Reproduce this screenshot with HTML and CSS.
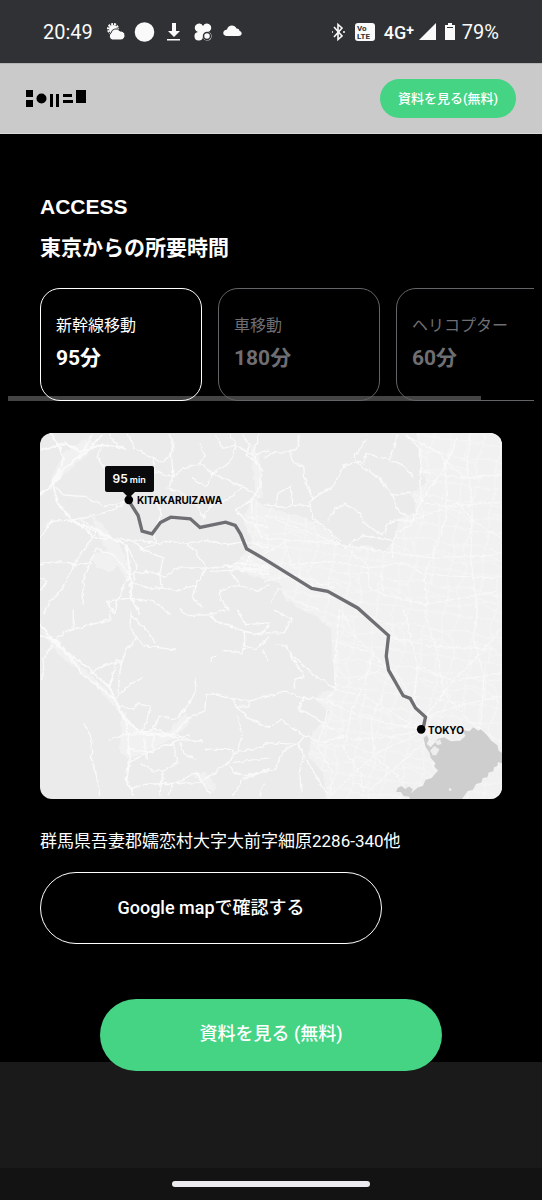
FILE: index.html
```html
<!DOCTYPE html>
<html lang="ja">

<head>
    <meta charset="utf-8">
    <meta name="viewport" content="width=device-width, initial-scale=1">
    <title>ACCESS</title>
    <link rel="stylesheet" href="styles.css">
</head>

<body>
    <!-- Phone status bar -->
    <div class="status">
        <span class="status-text">20:49</span>
        <svg class="status-left" viewBox="0 0 136 24" fill="#fafafa">
            <circle cx="7" cy="9" r="5" fill="none" stroke="#fafafa" stroke-width="2" stroke-dasharray="2 1" />
            <circle cx="7" cy="9" r="4" />
            <path d="M6 20a4 4 0 0 1-1-7 5 5 0 0 1 9-2 4.500 4.500 0 0 1 1 9z" stroke="#303134" stroke-width="1" />
            <circle cx="38.500" cy="12" r="9.800" />
            <path d="M66 3h4v8h4l-6 6-6-6h4zM61 19h13v1.500H61z" />
            <path d="M97 6a4.300 4.300 0 1 1 5 6 4.300 4.300 0 1 1-5 5 4.300 4.300 0 1 1-5-5A4.300 4.300 0 1 1 97 6z" />
            <circle cx="101" cy="16" r="3.500" stroke="#303134" stroke-width="1.500" />
            <path d="M121 16c-5 0-5-6 0-6.500 1-5 8-5 9.500-1 2 0 3 1 3 2.500 3 .5 3 5-1 5z" />
        </svg>
        <svg class="status-right" viewBox="0 0 48 24" fill="#fafafa">
            <path d="M4 7l8 9-4 3.500v-15L12 8l-8 9M2 12h1M13 12h2" fill="none" stroke="#fafafa" stroke-width="1.600" />
            <rect x="25" y="3" width="20" height="18" rx="3" />
            <g fill="#303134" font-family="Roboto, sans-serif" font-size="8" font-weight="700">
                <text x="27" y="11">Vo</text>
                <text x="27" y="19">LTE</text>
            </g>
        </svg>
        <span class="status-text status-net">4G<b>+</b></span>
        <svg class="status-power" viewBox="0 0 40 24" fill="#fafafa">
            <path d="M18 3v17H1z" />
            <path d="M30 3h4v2h3v15H27V5h3z" />
            <path d="M29 7h6v1h-6z" fill="#303134" />
        </svg>
        <span class="status-text">79%</span>
    </div>

    <header class="header">
        <a href="#" class="logo" aria-label="Home">
            <svg viewBox="0 0 60 18">
                <path d="M0 0h7v7H0zM0 10h7v7H0zM24 4h3v13h-3zM30 4h3v13h-3zM37 4h9v3h-9zM37 10h10v3H37zM50 0h10v13H50z" />
                <circle cx="15.500" cy="8.500" r="5" />
            </svg>
        </a>
        <a href="#" class="header-btn">資料を見る(無料)</a>
    </header>

    <main class="access">
        <h2 class="title">ACCESS</h2>
        <p class="subtitle">東京からの所要時間</p>

        <div class="tabs">
            <div class="tabs-list">
                <button class="tab active">新幹線移動<strong>95分</strong></button>
                <button class="tab">車移動<strong>180分</strong></button>
                <button class="tab">ヘリコプター<strong>60分</strong></button>
            </div>
        </div>

        <div class="map">
            <svg viewBox="0 0 1389 1101">
                <defs>
                    <filter id="wiggle" x="0" y="0" width="100%" height="100%">
                        <feTurbulence type="fractalNoise" baseFrequency="0.06" numOctaves="2" seed="4" />
                        <feDisplacementMap in="SourceGraphic" scale="14" xChannelSelector="R" yChannelSelector="G" />
                    </filter>
                    <pattern id="streets" width="150" height="130" patternUnits="userSpaceOnUse" patternTransform="rotate(8)">
                        <path d="M0 20L60 32 150 20M0 72L40 60 95 85 150 72M0 110L80 105 150 110M30 0L20 50 30 130M74 0L85 60 74 130M120 0L108 40 128 90 120 130M20 50L85 60 128 90M60 32L108 40" fill="none" stroke="#f9f9f9" stroke-width="2" />
                    </pattern>
                </defs>
                <rect width="1389" height="1101" fill="#ebebeb" />
                <g filter="url(#wiggle)">
                    <!-- Kanto plain -->
                    <g id="plain">
                        <path class="land" d="M1130 -20L1145 106 1160 150 1120 180 1130 236 1080 260 1065 316 1040 356 985 340 905 346 860 300 805 256 740 240 675 221 640 190 610 260 640 330 600 380 560 400 640 430 675 440 720 450 735 496 785 531 830 550 875 591 880 680 890 771 850 780 825 801 870 840 855 861 820 900 805 971 850 1020 865 1120H1409V-20z" />
                        <path d="M1130 -20L1145 106 1160 150 1120 180 1130 236 1080 260 1065 316 1040 356 985 340 905 346 860 300 805 256 740 240 675 221 640 190 610 260 640 330 600 380 560 400 640 430 675 440 720 450 735 496 785 531 830 550 875 591 880 680 890 771 850 780 825 801 870 840 855 861 820 900 805 971 850 1020 865 1120H1409V-20z" fill="url(#streets)" />
                    </g>
                    <!-- Town areas -->
                    <g class="land">
                        <path d="M70 60L150 10 170 40 110 90 60 140 30 150zM150 240L190 280 240 340 270 400 260 440 220 380 180 320zM150 380q40-50 70 0t-40 30z" />
                        <path d="M0 590L60 630 110 690 200 770 290 890 380 900 440 840 450 870 400 920 270 980 240 960 245 850 150 740 50 660z" />
                        <path d="M460 1030l40-10 30 40-10 20zM630 20l30 60 10 110-20 10-10-100z" />
                    </g>
                    <g class="roads">
                        <!-- north west -->
                        <g transform="translate(-30 -24)">
                            <path d="M30 75L105 55 150 80 215 60 290 70M60 25L90 70 100 110 60 190 30 210M215 30L170 80 105 130 70 180 80 230 130 290 200 320 290 360 300 450 305 520 330 570" stroke-width="6" />
                            <path d="M190 30L150 90 90 140 70 180M215 60L205 100 225 130M70 180L100 210 160 215 225 245 295 228M295 228L240 260 130 285 60 290 30 340" />
                            <path d="M295 30L315 70 370 100 375 140 430 155 425 85 432 60 418 30M290 70L250 50 240 28M370 100L400 115 425 85M430 155L460 130 510 115 550 145 590 165 660 195 690 220M510 55L525 90 510 115M485 160L530 185 550 145 600 115 620 60 600 28M560 30L580 70 620 60 670 90 700 140" />
                            <path d="M430 155L415 190 450 200 500 240 520 280 545 240 590 225 640 190M640 30L660 60 650 90 690 120 695 180 665 225 670 290 700 340M690 28L670 90 720 75M665 225L620 255 650 290 720 310" />
                            <path d="M380 230L395 270 370 325 380 355 300 345 200 340 130 285M30 420L80 410 130 420 180 415 200 370 250 390 300 450 265 520 255 568M130 420L100 490 60 530 40 568M180 415L160 470 160 540M200 320L160 380 130 420" />
                            <path d="M300 345L340 370 410 350 470 355 500 380 530 430 500 480 440 500 395 490 390 450 400 400 330 370M470 355L530 345 590 360 650 350 720 370M300 450L350 440 410 455 440 430 530 430 600 425 720 440M300 475L360 490 395 490M500 480L490 520 520 550M600 440L630 480 575 495 570 520 600 560M665 390L640 430 720 430M630 480L680 500 720 480" />
                            <path d="M300 520L370 530 420 570M30 500L50 470 30 460M255 568L230 530 300 520M150 285L230 330 290 360 320 420 300 520M560 430L620 415 720 425M540 440L640 435 720 450" />
                        </g>
                        <!-- north east -->
                        <g transform="translate(675 -24)">
                            <path d="M307 45L270 90 272 112 235 125 210 180 145 222 135 245 148 280 230 350M272 112L340 155 385 210 400 255 430 275M272 112L300 115 305 85 375 105 400 30M375 105L420 125 448 160M385 210L440 205M0 100L30 80 75 82 90 118 118 125 120 160 145 222M105 30L100 70 75 82M35 240L40 205 80 185 85 240M0 240L60 248 105 240 135 245" />
                            <path d="M190 290L215 250 240 238 285 262 300 295 335 320 355 330 370 295 400 285 440 290M240 370L300 330 385 350 400 320 440 300 470 230 540 130 580 35M420 30L470 70 470 230M420 30L520 80 545 110 540 130M382 400L385 350" />
                            <path d="M0 270L100 310 230 360 330 375 500 400 700 390M0 340L130 350 230 360M545 110L550 200 545 280 520 360 480 450 490 560M440 290L580 235 630 290 710 340M620 30L610 120 625 240 620 400 640 560M545 110L600 160 710 150M470 140L600 160M450 230L560 245 710 230M150 290L230 360 310 420 315 490 360 510 480 540 700 500M350 440L355 500M0 390L60 350 80 420 200 410 310 430 420 415 480 450 700 460M20 535L40 490 90 530 165 555M0 470L90 450 210 490" stroke-width="3" />
                        </g>
                        <!-- south west -->
                        <g transform="translate(-30 531)">
                            <path d="M30 40L70 95 180 180 240 235 280 320 330 370 460 380M30 75L80 95 165 200 250 265 290 340 300 450 290 510 310 560" stroke-width="6" />
                            <path d="M70 95L100 70 165 50 240 30 240 0M130 0L130 60M70 105L40 150 35 210M185 190L205 175 250 160 275 160 270 190 265 250M240 235L260 150 275 160 290 120 320 85 345 110 435 120M305 0L300 50 320 85M305 20L345 55 378 100M260 265L300 225 343 203M265 290L310 300 325 280 362 295 355 330 330 370M330 370L370 360 390 320 440 330 480 280 500 240 495 205M165 345L185 390 185 450 200 500 210 560M235 395L280 375 420 380 450 390 520 395" />
                            <path d="M420 380L485 320 525 305 530 255 560 253 610 268 660 275 720 258M610 268L620 290 655 290 660 275M620 290L655 325 720 355M300 460L350 430 430 400 480 375M450 400L460 430 500 450M430 400L445 460 400 485 390 560M330 460L370 485 400 485M300 540L350 525 510 520M415 560L430 525 500 490 520 525 545 558M510 520L570 480 600 460 615 430 610 420 525 420M615 430L690 415 720 400M610 460L720 445M600 470L610 490 650 500 720 480M610 560L640 510 720 480M620 320L640 370 625 420" />
                            <path d="M450 0L480 18 540 15 590 0M540 15L560 35 645 65 690 75 720 45M645 65L645 110 680 120 720 80M580 123L640 130 645 115M620 0L650 45 720 40M545 160L545 145 560 140M700 120L715 155M310 370L380 360 430 380M300 420L370 430 370 370M340 370L350 450M690 560L705 520" />
                        </g>
                        <!-- south east -->
                        <g transform="translate(675 531)">
                            <path d="M0 265L60 245 120 265 180 270 215 240 210 170 225 0M0 355L30 345 50 330 120 380 100 405 0 400M100 405L60 420 30 480 0 490M120 380L180 400 240 380M30 105L65 110 75 130 140 190 215 240M90 240L90 210 120 200 75 130M100 405L120 440 105 470 110 550M120 440L190 560M0 70L60 70 80 30 30 0M120 265L100 300 130 310 180 345" />
                            <path d="M225 100L320 130 410 210 450 280M215 240L300 260 400 320 470 360M180 270L260 310 360 340 470 360M180 345L260 390 400 380 470 360M200 560L260 500 340 430 470 370M265 520L320 540 400 470 480 400M230 0L270 80 330 130 300 220 260 310 240 420 290 500 300 560M420 0L440 90 460 170 450 280 484 323M370 80L500 110 700 120M484 323L570 210 660 120 710 60M484 323L580 290 710 260M460 170L570 215 710 190M484 323L540 250 520 130 480 0M540 250L620 340 710 400M640 0L630 100 660 200 650 350M190 300L160 420 200 480 200 560M350 180L240 230M360 250L320 330 330 440 410 510" stroke-width="3" />
                        </g>
                    </g>
                </g>
                <!-- Tokyo bay -->
                <g transform="translate(675 531)">
                    <path fill="#cecece" d="M478 386L488 378 494 390 488 404 500 414 522 388 540 384 560 396 588 394 604 380 596 362 616 366 628 354 642 364 650 360 666 374 682 394 700 408 704 424 714 430V462L702 458 700 470 690 474 688 486 674 490 670 504 656 506 652 520 636 524 626 542 610 546 600 560 590 575H440L434 562 418 560 410 548 396 548 400 536 412 530 424 540 432 530 446 540 440 552 462 534 476 530 484 512 502 506 522 484 510 472 514 462 500 446 496 430 484 412z" />
                    <path fill="#eee" d="M498 424L510 410 526 420 516 438 506 438zM512 398L528 390 532 404 520 408zM420 520L436 532 424 538z" />
                    <circle cx="558" cy="541" r="4" fill="#eee" />
                </g>
                <!-- Shinkansen route -->
                <path class="route" d="M267 204L295 248 307 295 337 303 362 269 393 253 452 258 481 284 558 268 587 278 603 304 621 348 675 379 817 467 865 476 955 526 1048 609 1041 671 1048 713 1092 790 1113 798 1129 827 1159 854 1153 883" />
                <circle cx="267" cy="201" r="13" />
                <circle cx="1146" cy="891" r="13" />
            </svg>
            <span class="pin pin-time">95 <small>min</small></span>
            <span class="pin pin-start">KITAKARUIZAWA</span>
            <span class="pin pin-end">TOKYO</span>
        </div>

        <p class="address">群馬県吾妻郡嬬恋村大字大前字細原2286-340他</p>
        <a href="#" class="btn btn-outline">Google mapで確認する</a>
        <a href="#" class="btn btn-green">資料を見る (無料)</a>
    </main>

    <footer class="footer"></footer>
    <div class="gesture"><span></span></div>
</body>

</html>
```
FILE: styles.css
```css
* {
    box-sizing: border-box;
}

body {
    margin: 0;
    min-height: 100vh;
    display: flex;
    flex-direction: column;
    background: #000;
    color: #fff;
    font-family: Roboto, "Noto Sans CJK JP", sans-serif;
}

a {
    text-decoration: none;
}

/* Status bar */
.status {
    display: flex;
    align-items: center;
    height: 63px;
    padding: 0 43px;
    background: #303134;
    color: #fafafa;
}

.status svg {
    height: 24px;
}

.status-text {
    font-size: 20px;
    line-height: 24px;
}

.status-left {
    width: 136px;
    margin-left: 13px;
}

.status-right {
    width: 48px;
    margin-left: auto;
}

.status-net {
    margin: 0 4px 0 6px;
    font-size: 18px;
    font-weight: 500;
    white-space: nowrap;
}

.status-net b {
    font-size: 14px;
    vertical-align: 4px;
}

.status-power {
    width: 40px;
    margin-right: 4px;
}

/* Header */
.header {
    display: flex;
    justify-content: space-between;
    align-items: center;
    height: 71px;
    padding: 0 26px;
    background: #cacaca;
    border-top: 1px solid #b4b4b4;
    border-bottom: 1px solid #dadada;
}

.logo svg {
    display: block;
    width: 60px;
    height: 18px;
}

.header-btn {
    width: 136px;
    border-radius: 20px;
    background: #44d484;
    color: #fff;
    font-size: 13px;
    font-weight: 500;
    line-height: 39px;
    text-align: center;
}

/* Access */
.access {
    display: flex;
    flex-direction: column;
    padding: 60px 40px 0;
}

.title {
    margin: 0;
    font-family: "Liberation Sans", sans-serif;
    font-size: 21px;
    line-height: 26px;
}

.subtitle {
    margin: 12px 0 24px;
    font-size: 21px;
    font-weight: 700;
    line-height: 32px;
}

.tabs {
    position: relative;
    margin: 0 -32px 32px;
}

/* scrollbar under the cards */
.tabs::before {
    content: "";
    position: absolute;
    left: 0;
    bottom: 0;
    width: 90%;
    height: 5px;
    background: #444;
}

.tabs-list {
    position: relative;
    display: flex;
    gap: 16px;
    padding-left: 32px;
    overflow-x: auto;
    scrollbar-width: none;
}

.tab {
    flex: 0 0 162px;
    height: 113px;
    padding: 0 15px 2px;
    border: 1px solid #646468;
    border-radius: 20px;
    background: none;
    color: #6e6e73;
    font-family: inherit;
    font-size: 16px;
    line-height: 24px;
    text-align: left;
}

.tab strong {
    display: block;
    margin-top: 4px;
    font-size: 21px;
    line-height: 32px;
}

.tab.active {
    border-color: #fff;
    color: #fff;
}

/* Map */
.map {
    position: relative;
    overflow: hidden;
    border-radius: 12px;
    color: #000;
    font-family: Inter, sans-serif;
}

.map svg {
    display: block;
    width: 100%;
}

.land {
    fill: #f1f1f1;
}

.roads {
    fill: none;
    stroke: #fafafa;
    stroke-width: 4;
    stroke-linejoin: round;
}

.route {
    fill: none;
    stroke: #6e6e73;
    stroke-width: 10;
}

.pin {
    position: absolute;
    font-size: 10px;
    font-weight: 700;
    line-height: 16px;
}

.pin-start {
    left: 21%;
    top: 16%;
}

.pin-end {
    left: 84%;
    top: 79%;
}

.pin-time {
    left: 14%;
    top: 9%;
    width: 49px;
    border-radius: 2px;
    background: #0a0a0c;
    color: #fff;
    font-size: 12px;
    font-weight: 600;
    line-height: 25px;
    text-align: center;
}

.pin-time small {
    margin-left: -1px;
    font-size: 9px;
}

.pin-time::after {
    content: "";
    position: absolute;
    left: 50%;
    top: 100%;
    margin-left: -6px;
    border: 6px solid transparent;
    border-top-color: #0a0a0c;
}

.address {
    margin: 28px 0 17px;
    font-size: 17px;
    line-height: 28px;
}

/* Buttons */
.btn {
    width: 342px;
    max-width: 100%;
    height: 72px;
    border-radius: 36px;
    color: #fff;
    font-size: 18px;
    font-weight: 500;
    line-height: 70px;
    text-align: center;
}

.btn-outline {
    border: 1px solid #fff;
}

.btn-green {
    align-self: center;
    position: relative;
    margin: 55px 0 -9px;
    background: #44d484;
}

.footer {
    flex: 1;
    min-height: 106px;
    background: #1a1a1a;
}

.gesture {
    display: flex;
    justify-content: center;
    align-items: center;
    height: 32px;
    background: #131313;
}

.gesture span {
    width: 198px;
    height: 6px;
    border-radius: 3px;
    background: #ececf0;
}
```
